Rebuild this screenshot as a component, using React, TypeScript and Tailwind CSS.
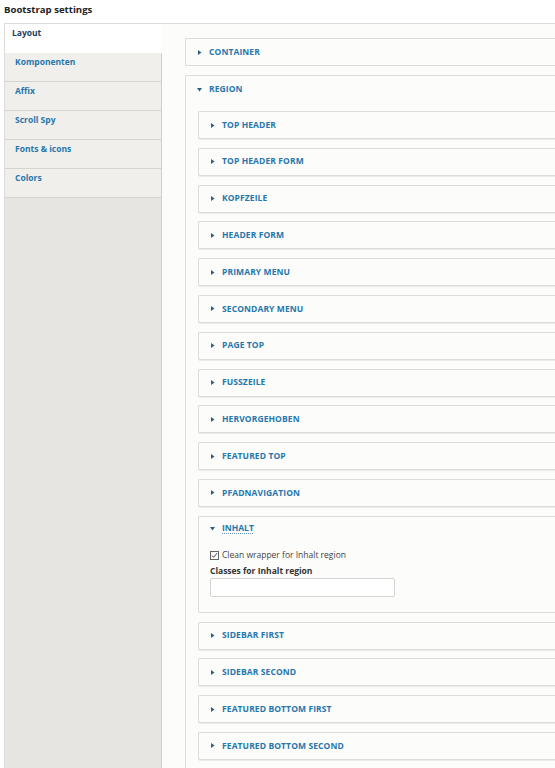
import { useState } from "react";

const tabs = ["Layout", "Komponenten", "Affix", "Scroll Spy", "Fonts & icons", "Colors"];

const regions = [
  "TOP HEADER",
  "TOP HEADER FORM",
  "KOPFZEILE",
  "HEADER FORM",
  "PRIMARY MENU",
  "SECONDARY MENU",
  "PAGE TOP",
  "FUSSZEILE",
  "HERVORGEHOBEN",
  "FEATURED TOP",
  "PFADNAVIGATION",
];

const after = ["SIDEBAR FIRST", "SIDEBAR SECOND", "FEATURED BOTTOM FIRST", "FEATURED BOTTOM SECOND"];

function Arrow({ open }: { open?: boolean }) {
  return (
    <svg width="5" height="5" viewBox="0 0 5 5" className="shrink-0 text-[#2f5f86]">
      {open ? <path d="M0 1h5L2.5 4.5z" fill="currentColor" /> : <path d="M1 0v5l3.5-2.5z" fill="currentColor" />}
    </svg>
  );
}

function Summary({ label, open }: { label: string; open?: boolean }) {
  return (
    <div className="flex items-center gap-[7px] h-[26px] pl-[11px]">
      <Arrow open={open} />
      <span className="text-[8.5px] font-bold tracking-[0.1px] text-[#2677ad]">{label}</span>
    </div>
  );
}

function Closed({ label }: { label: string }) {
  return (
    <div className="mb-[8.8px] rounded-l-[2px] border border-r-0 border-[#dcdcd8] bg-[#fcfcfa] shadow-[0_1px_0_#ebebe8]">
      <Summary label={label} />
    </div>
  );
}

export default function App() {
  const [active] = useState(0);
  const [checked, setChecked] = useState(true);

  return (
    <div className="h-[768px] overflow-hidden bg-white font-['Open_Sans',sans-serif]">
      <h1 className="h-[23px] pl-[4px] pt-[3px] text-[9.6px] font-bold text-[#222]">Bootstrap settings</h1>

      <div className="flex ml-[4px] h-[745px] border-t border-l border-[#dcdcd8]">
        {/* tab list */}
        <div className="w-[157px] shrink-0 bg-[#e6e5e1] border-r border-[#cfcec9]">
          {tabs.map((t, i) =>
            i === active ? (
              <div key={t} className="h-[29px] bg-white pl-[7px] pt-[3px] text-[8.5px] font-bold text-[#1c3d5e] -mr-px shadow-[0_1px_0_#d6d5d0]">
                {t}
              </div>
            ) : (
              <div
                key={t}
                className="h-[29px] bg-[#f0efec] border-b border-[#d4d3ce] pl-[10px] pt-[3px] text-[8.5px] font-bold text-[#2677ad]"
              >
                {t}
              </div>
            )
          )}
        </div>

        {/* panel */}
        <div className="flex-1 bg-[#fcfcfa] pl-[23px] pt-[14px]">
          <div className="mb-[9px] rounded-l-[2px] border border-r-0 border-[#dcdcd8] bg-[#fcfcfa]">
            <Summary label="CONTAINER" />
          </div>

          <div className="rounded-l-[2px] border border-r-0 border-[#dcdcd8] bg-[#fcfcfa]">
            <div className="mb-[9px]">
              <Summary label="REGION" open />
            </div>
            <div className="pl-[12px]">
              {regions.map((r) => (
                <Closed key={r} label={r} />
              ))}

              {/* open Inhalt */}
              <div className="mb-[8.8px] h-[97px] rounded-l-[2px] border border-r-0 border-[#dcdcd8] bg-[#fcfcfa]">
                <div className="flex items-center gap-[7px] h-[24px] pl-[11px]">
                  <Arrow open />
                  <span className="text-[8.5px] font-bold text-[#2677ad] underline decoration-dotted decoration-[#6a8fb0] underline-offset-2">
                    INHALT
                  </span>
                </div>
                <label
                  className="flex items-center gap-[3px] pl-[11px] mt-[8px] text-[8.5px] text-[#444] cursor-pointer"
                  onClick={() => setChecked(!checked)}
                >
                  <span className="w-[9px] h-[9px] border border-[#666] bg-white flex items-center justify-center">
                    {checked && (
                      <svg width="7" height="7" viewBox="0 0 7 7">
                        <path d="M1 3.5l1.7 1.8L6 1.2" fill="none" stroke="#444" strokeWidth="1" />
                      </svg>
                    )}
                  </span>
                  Clean wrapper for Inhalt region
                </label>
                <div className="pl-[11px] mt-[3px] text-[8.5px] font-bold text-[#333]">Classes for Inhalt region</div>
                <input className="ml-[11px] mt-[1px] block w-[185px] h-[19px] border border-[#d4d4d0] rounded-[2px] bg-white" />
              </div>

              {after.map((r) => (
                <Closed key={r} label={r} />
              ))}
            </div>
          </div>
        </div>
      </div>
    </div>
  );
}
